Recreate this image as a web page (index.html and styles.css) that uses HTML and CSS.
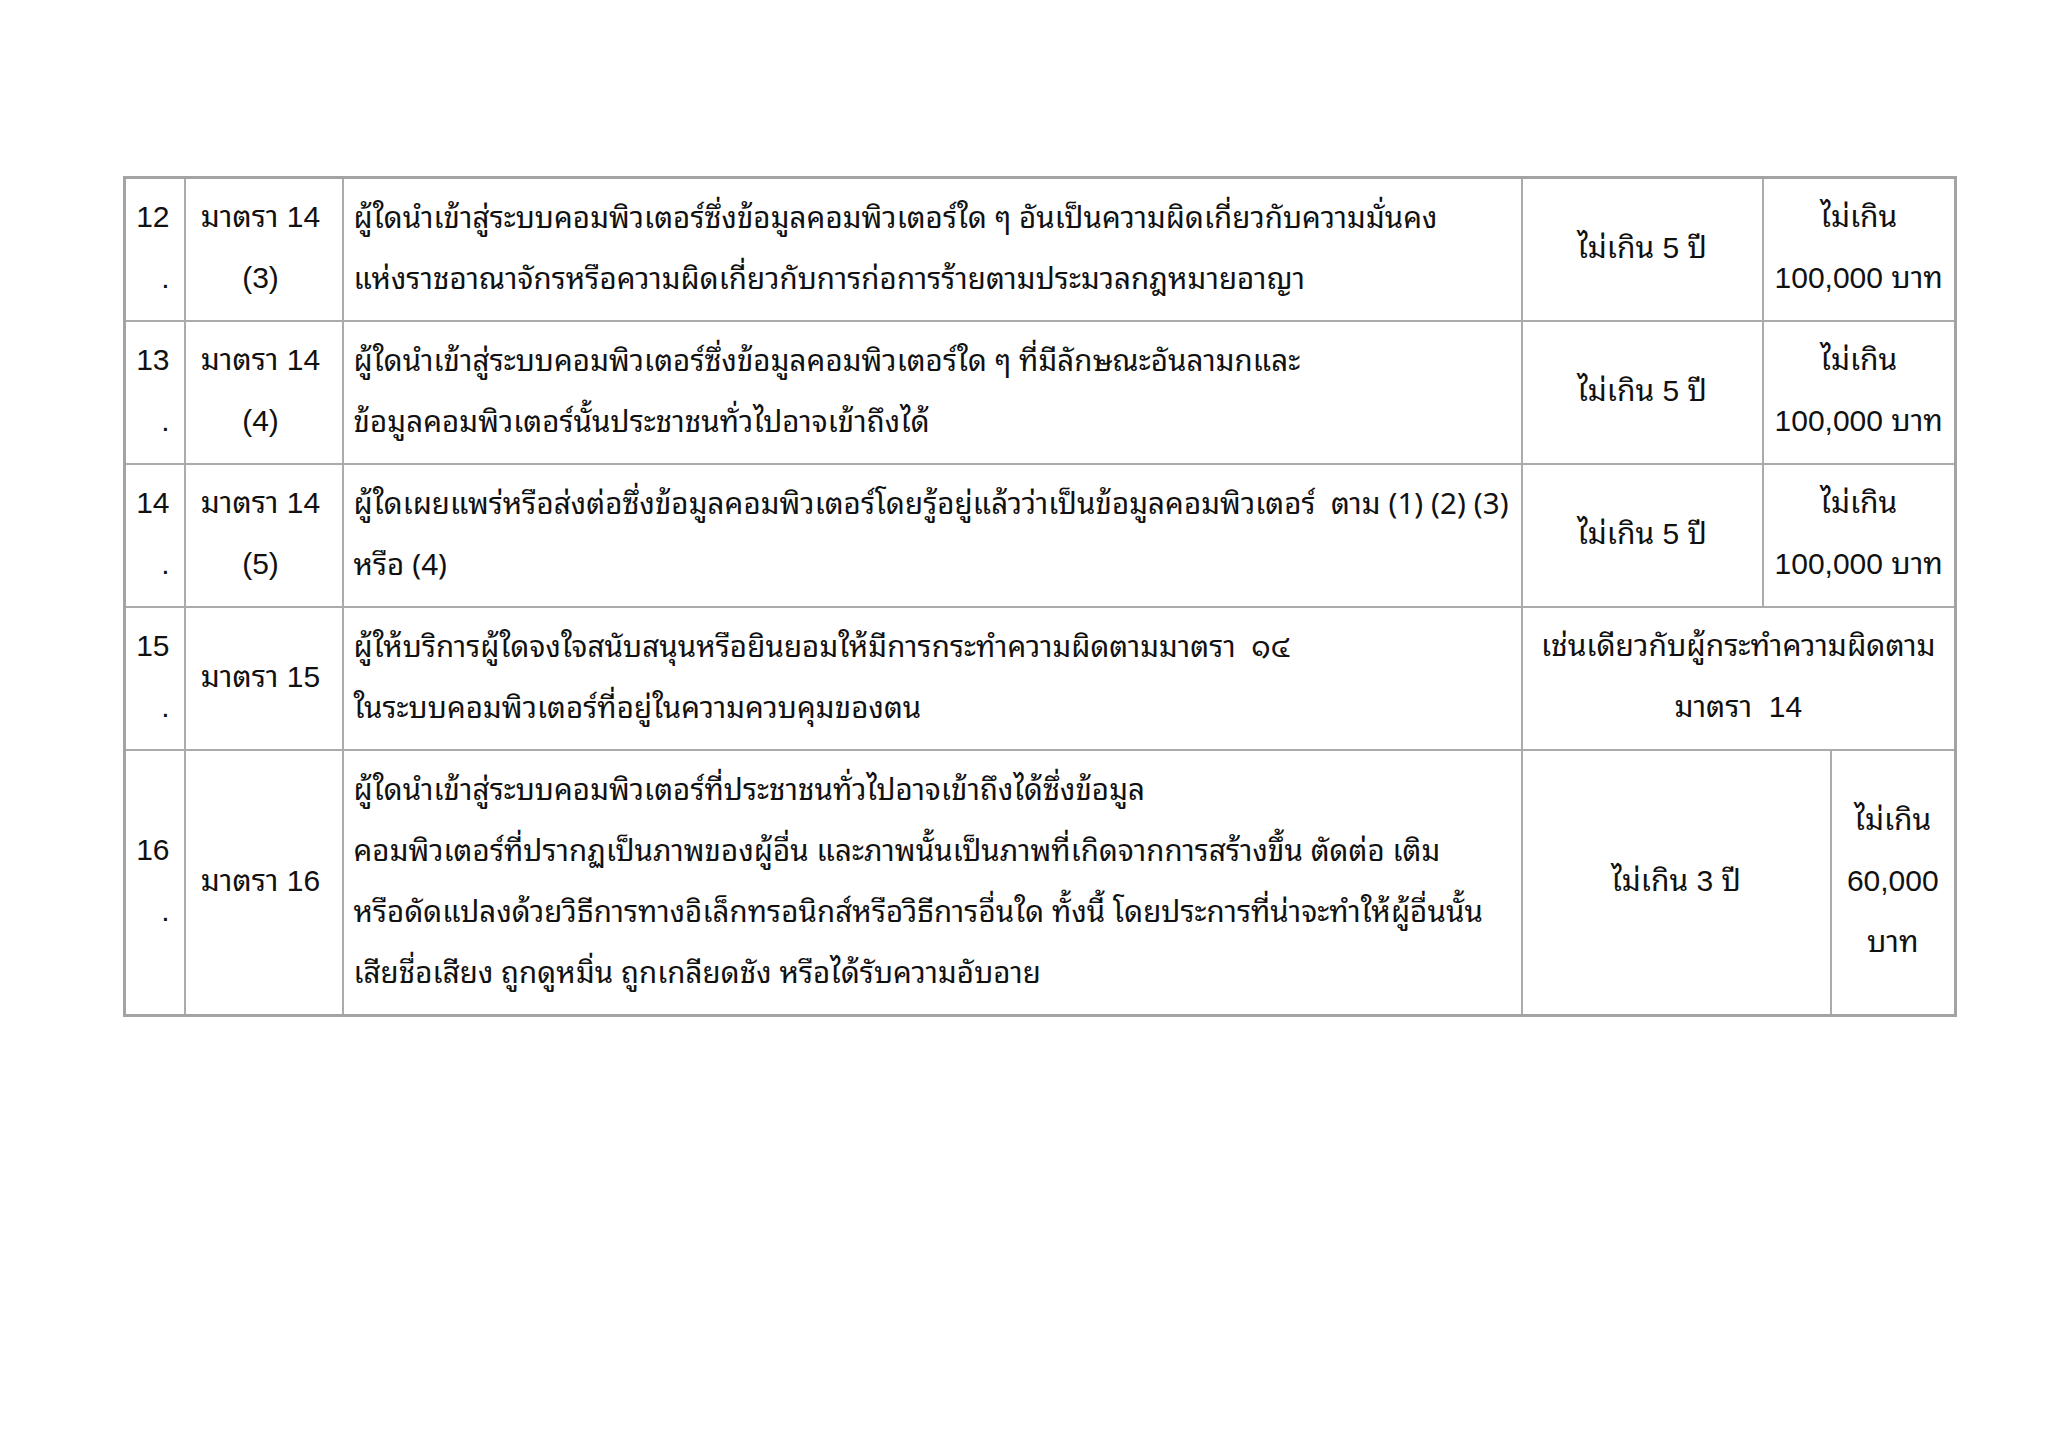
FILE: index.html
```html
<!DOCTYPE html>
<html lang="th">
<head>
<meta charset="utf-8">
<title>ตารางความผิด พ.ร.บ. คอมพิวเตอร์</title>
<link rel="stylesheet" href="styles.css">
</head>
<body>
<div class="page">
  <table class="law">
    <colgroup>
      <col class="c-no">
      <col class="c-sec">
      <col class="c-desc">
      <col class="c-jail">
      <col class="c-mid">
      <col class="c-fine">
    </colgroup>
    <tbody>
      <tr>
        <td class="no">12<br>.</td>
        <td class="sec">มาตรา 14<br>(3)</td>
        <td class="desc">ผู้ใดนำเข้าสู่ระบบคอมพิวเตอร์ซึ่งข้อมูลคอมพิวเตอร์ใด ๆ อันเป็นความผิดเกี่ยวกับความมั่นคง<br>แห่งราชอาณาจักรหรือความผิดเกี่ยวกับการก่อการร้ายตามประมวลกฎหมายอาญา</td>
        <td class="ctr">ไม่เกิน 5 ปี</td>
        <td class="ctr" colspan="2">ไม่เกิน<br>100,000 บาท</td>
      </tr>
      <tr>
        <td class="no">13<br>.</td>
        <td class="sec">มาตรา 14<br>(4)</td>
        <td class="desc">ผู้ใดนำเข้าสู่ระบบคอมพิวเตอร์ซึ่งข้อมูลคอมพิวเตอร์ใด ๆ ที่มีลักษณะอันลามกและ<br>ข้อมูลคอมพิวเตอร์นั้นประชาชนทั่วไปอาจเข้าถึงได้</td>
        <td class="ctr">ไม่เกิน 5 ปี</td>
        <td class="ctr" colspan="2">ไม่เกิน<br>100,000 บาท</td>
      </tr>
      <tr>
        <td class="no">14<br>.</td>
        <td class="sec">มาตรา 14<br>(5)</td>
        <td class="desc">ผู้ใดเผยแพร่หรือส่งต่อซึ่งข้อมูลคอมพิวเตอร์โดยรู้อยู่แล้วว่าเป็นข้อมูลคอมพิวเตอร์&nbsp; ตาม (1) (2) (3)<br>หรือ (4)</td>
        <td class="ctr">ไม่เกิน 5 ปี</td>
        <td class="ctr" colspan="2">ไม่เกิน<br>100,000 บาท</td>
      </tr>
      <tr>
        <td class="no">15<br>.</td>
        <td class="sec">มาตรา 15</td>
        <td class="desc">ผู้ให้บริการผู้ใดจงใจสนับสนุนหรือยินยอมให้มีการกระทำความผิดตามมาตรา&nbsp; ๑๔<br>ในระบบคอมพิวเตอร์ที่อยู่ในความควบคุมของตน</td>
        <td class="ctr" colspan="3">เช่นเดียวกับผู้กระทำความผิดตาม<br>มาตรา&nbsp; 14</td>
      </tr>
      <tr>
        <td class="no">16<br>.</td>
        <td class="sec">มาตรา 16</td>
        <td class="desc">ผู้ใดนำเข้าสู่ระบบคอมพิวเตอร์ที่ประชาชนทั่วไปอาจเข้าถึงได้ซึ่งข้อมูล<br>คอมพิวเตอร์ที่ปรากฏเป็นภาพของผู้อื่น และภาพนั้นเป็นภาพที่เกิดจากการสร้างขึ้น ตัดต่อ เติม<br>หรือดัดแปลงด้วยวิธีการทางอิเล็กทรอนิกส์หรือวิธีการอื่นใด ทั้งนี้ โดยประการที่น่าจะทำให้ผู้อื่นนั้น<br>เสียชื่อเสียง ถูกดูหมิ่น ถูกเกลียดชัง หรือได้รับความอับอาย</td>
        <td class="ctr" colspan="2">ไม่เกิน 3 ปี</td>
        <td class="ctr">ไม่เกิน<br>60,000<br>บาท</td>
      </tr>
    </tbody>
  </table>
</div>
</body>
</html>
```

FILE: styles.css
```css
html, body {
  margin: 0;
  padding: 0;
  background: #ffffff;
}

.page {
  width: 2048px;
  height: 1448px;
  padding: 176px 0 0 123px;
  box-sizing: border-box;
}

.law {
  border-collapse: collapse;
  table-layout: fixed;
  width: 1831px;
  border: 3px solid #a3a3a3;
  font-family: "Liberation Sans", "Noto Sans Thai Looped", "Noto Serif Thai", "Loma", "Garuda", "Norasi", "Noto Sans Thai", sans-serif;
  font-size: 30px;
  line-height: 61px;
  color: #111111;
}

.c-no { width: 60px; }
.c-sec { width: 158px; }
.c-desc { width: 1179px; }
.c-jail { width: 241px; }
.c-mid { width: 68px; }
.c-fine { width: 125px; }

.law td {
  border: 2px solid #ababab;
  padding: 7px 10px 12px;
  vertical-align: middle;
  white-space: nowrap;
}

.law td.no {
  text-align: right;
  padding-right: 14px;
  padding-left: 2px;
}

.law td.sec {
  text-align: center;
  padding-left: 2px;
  padding-right: 8px;
}

.law td.desc {
  text-align: left;
  padding: 5px 8px 14px 10px;
  font-family: "Liberation Sans Narrow", "Noto Sans Thai Looped", "Noto Serif Thai", "Loma", "Garuda", "Norasi", "Noto Sans Thai", sans-serif;
  font-size: 29.5px;
  letter-spacing: 0.1px;
}

.law td.ctr {
  text-align: center;
}
```
